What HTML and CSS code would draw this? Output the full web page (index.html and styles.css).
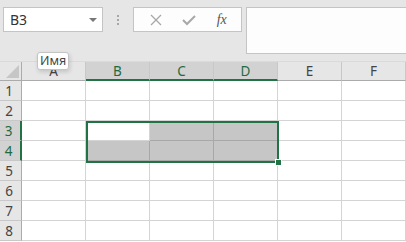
FILE: index.html
```html
<!DOCTYPE html>
<html lang="ru">
<head>
    <meta charset="UTF-8">
    <title>Лист</title>
    <link rel="stylesheet" href="styles.css">
</head>
<body>
    <div class="toolbar">
        <div class="name-box">
            <span>B3</span>
            <span class="caret"></span>
        </div>
        <div class="dots"><i></i><i></i><i></i></div>
        <div class="fx-buttons">
            <svg width="12" height="12" viewBox="0 0 12 12"><path d="M1 1 L11 11 M11 1 L1 11" stroke="#a8a8a8" stroke-width="1.3" fill="none"/></svg>
            <svg width="14" height="12" viewBox="0 0 14 12"><path d="M1 6 L5 10 L13 2" stroke="#a8a8a8" stroke-width="2" fill="none"/></svg>
            <span class="fx">fx</span>
        </div>
        <div class="formula-input"></div>
    </div>

    <div class="sheet">
        <div class="corner"><span class="tri"></span></div>
        <div class="col-head">A</div>
        <div class="col-head sel">B</div>
        <div class="col-head sel">C</div>
        <div class="col-head sel">D</div>
        <div class="col-head">E</div>
        <div class="col-head">F</div>
    </div>
    <div class="sheet" id="rows"></div>

    <div class="tooltip">Имя</div>

    <script>
        const rows = document.getElementById("rows");
        const shaded = ["C3", "D3", "B4", "C4", "D4"];
        const cols = ["A", "B", "C", "D", "E", "F"];

        for (let r = 1; r <= 8; r++) {
            const head = document.createElement("div");
            head.className = "row-head" + (r === 3 || r === 4 ? " sel" : "");
            head.textContent = r;
            rows.appendChild(head);

            cols.forEach(c => {
                const cell = document.createElement("div");
                cell.className = "cell" + (shaded.includes(c + r) ? " shaded" : "");
                rows.appendChild(cell);
            });
        }

        // рамка выделения B3:D4
        const frame = document.createElement("div");
        frame.className = "selection";
        frame.innerHTML = '<span class="handle"></span>';
        rows.appendChild(frame);
    </script>
</body>
</html>
```

FILE: styles.css
```css
body {
    margin: 0;
    font-family: 'Noto Sans', 'Open Sans', sans-serif;
    background-color: #ffffff;
    width: 406px;
    height: 242px;
    overflow: hidden;
    position: relative;
}

.toolbar {
    height: 62px;
    box-sizing: border-box;
    background-color: #e6e6e6;
    border-bottom: 1px solid #dadada;
    display: flex;
    align-items: flex-start;
    padding: 7px 0 0 3px;
}

.name-box {
    width: 100px;
    height: 25px;
    box-sizing: border-box;
    background: #ffffff;
    border: 1px solid #c4c4c4;
    display: flex;
    align-items: center;
    justify-content: space-between;
    padding: 0 5px 0 6px;
    font-size: 14px;
    color: #333;
}

.caret {
    width: 0;
    height: 0;
    border-left: 4px solid transparent;
    border-right: 4px solid transparent;
    border-top: 4px solid #777;
    margin-top: 1px;
}

.dots {
    width: 30px;
    height: 25px;
    display: flex;
    flex-direction: column;
    align-items: center;
    justify-content: center;
    gap: 2px;
}

.dots i {
    width: 2px;
    height: 2px;
    background: #a6a6a6;
}

.fx-buttons {
    width: 109px;
    height: 25px;
    box-sizing: border-box;
    background: #fdfdfd;
    border: 1px solid #c4c4c4;
    display: flex;
    align-items: center;
    justify-content: space-around;
    padding: 0 4px 0 6px;
}

.fx {
    font-family: 'Liberation Serif', serif;
    font-style: italic;
    font-size: 14px;
    color: #555;
}

.formula-input {
    flex: 1;
    height: 45px;
    margin-left: 4px;
    background: #fdfdfd;
    border: 1px solid #c4c4c4;
    border-right: none;
}

.sheet {
    display: grid;
    grid-template-columns: 22px repeat(6, 64px);
    grid-auto-rows: 20px;
    position: relative;
}

.toolbar + .sheet {
    grid-auto-rows: 19px;
}

.corner {
    background: #e6e6e6;
    border-right: 1px solid #ababab;
    border-bottom: 1px solid #ababab;
    position: relative;
}

.tri {
    position: absolute;
    right: 2px;
    bottom: 2px;
    width: 0;
    height: 0;
    border-left: 13px solid transparent;
    border-bottom: 13px solid #c6c6c6;
}

.col-head {
    background: #e6e6e6;
    border-right: 1px solid #c8c8c8;
    border-bottom: 1px solid #ababab;
    font-size: 13.5px;
    color: #444;
    display: flex;
    align-items: center;
    justify-content: center;
}

.col-head.sel {
    background: #d2d2d2;
    color: #1e6b41;
    border-bottom: 2px solid #217346;
}

.row-head {
    background: #e6e6e6;
    border-right: 1px solid #ababab;
    border-bottom: 1px solid #c8c8c8;
    font-size: 13.5px;
    color: #444;
    display: flex;
    align-items: center;
    justify-content: center;
    padding-right: 3px;
}

.row-head.sel {
    background: #d2d2d2;
    color: #1e6b41;
    border-right: 2px solid #217346;
}

.row-head, .col-head, .cell, .corner {
    box-sizing: border-box;
}

.cell {
    border-right: 1px solid #d4d4d4;
    border-bottom: 1px solid #d4d4d4;
}

.cell.shaded {
    background: #c6c6c6;
    border-color: #a8a8a8;
}

.selection {
    position: absolute;
    left: 86px;
    top: 40px;
    width: 193px;
    height: 42px;
    box-sizing: border-box;
    border: 2px solid #217346;
}

.handle {
    position: absolute;
    right: -5px;
    bottom: -5px;
    width: 5px;
    height: 5px;
    background: #217346;
    border: 1px solid #ffffff;
}

.tooltip {
    position: absolute;
    left: 37px;
    top: 52px;
    padding: 0 2px;
    height: 16px;
    line-height: 15px;
    background: #ffffff;
    border: 1px solid #c4c4c4;
    border-radius: 3px;
    box-shadow: 1px 2px 4px rgba(0, 0, 0, 0.15);
    font-size: 12.5px;
    color: #444;
}
```
